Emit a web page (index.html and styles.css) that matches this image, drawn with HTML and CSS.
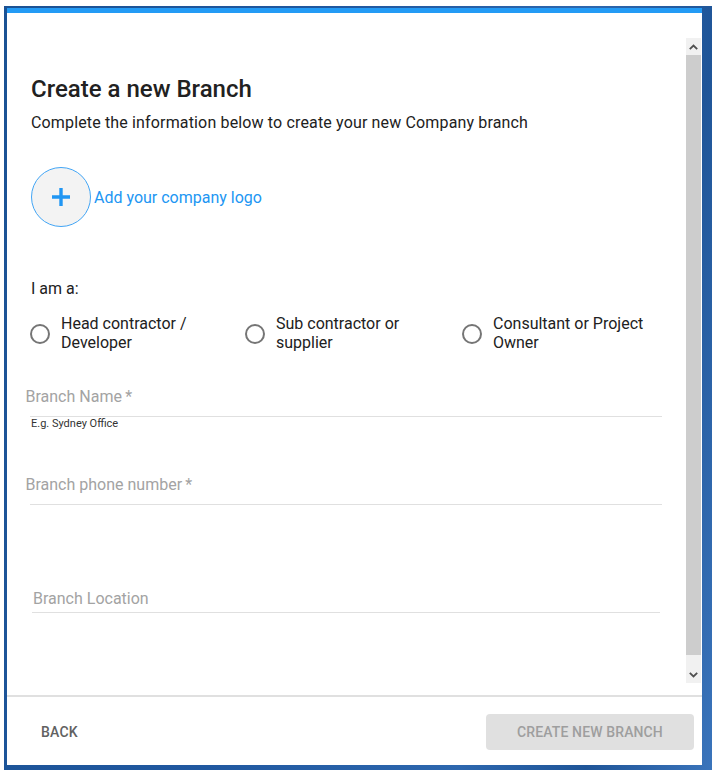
FILE: index.html
```html
<!DOCTYPE html>
<html lang="en">
<head>
<meta charset="utf-8">
<title>Create a new Branch</title>
<link rel="stylesheet" href="styles.css">
</head>
<body>
<div class="desktop">
  <div class="dialog">
    <div class="body">
      <div class="content">
        <h1 class="title">Create a new Branch</h1>
        <p class="subtitle">Complete the information below to create your new Company branch</p>

        <div class="logo-row">
          <div class="logo-circle">
            <svg width="20" height="20" viewBox="0 0 20 20"><path d="M10 1v18M1 10h18" stroke="#2196f3" stroke-width="3.4" fill="none"/></svg>
          </div>
          <span class="logo-text">Add your company logo</span>
        </div>

        <div class="iam">I am a:</div>
        <div class="radios">
          <label class="radio"><span class="radio-circle"></span><span class="radio-label">Head contractor / Developer</span></label>
          <label class="radio"><span class="radio-circle"></span><span class="radio-label">Sub contractor or supplier</span></label>
          <label class="radio"><span class="radio-circle"></span><span class="radio-label">Consultant or Project Owner</span></label>
        </div>

        <div class="field field-name">
          <div class="input"><span class="flabel">Branch Name&thinsp;*</span></div>
          <div class="helper">E.g. Sydney Office</div>
        </div>

        <div class="field field-phone">
          <div class="input"><span class="flabel">Branch phone number&thinsp;*</span></div>
        </div>

        <div class="field field-location">
          <div class="input"><span class="flabel">Branch Location</span></div>
        </div>
      </div>
      <div class="scrollbar">
        <div class="sb-btn sb-up">
          <svg width="9" height="6" viewBox="0 0 9 6"><path d="M0.8 5.2L4.5 1.5L8.2 5.2" stroke="#505050" stroke-width="1.8" fill="none"/></svg>
        </div>
        <div class="sb-thumb"></div>
        <div class="sb-gap"></div>
        <div class="sb-btn sb-down">
          <svg width="9" height="6" viewBox="0 0 9 6"><path d="M0.8 0.8L4.5 4.5L8.2 0.8" stroke="#505050" stroke-width="1.8" fill="none"/></svg>
        </div>
      </div>
    </div>
    <div class="footer">
      <span class="back">BACK</span>
      <span class="create">CREATE NEW BRANCH</span>
    </div>
  </div>
</div>
</body>
</html>
```

FILE: styles.css
```css
html, body {
  margin: 0;
  padding: 0;
  background: #ffffff;
}
body {
  font-family: Roboto, "Liberation Sans", sans-serif;
  color: #212121;
  width: 712px;
  height: 774px;
  overflow: hidden;
}
.desktop {
  margin: 6px 0 0 4px;
  width: 708px;
  height: 764px;
  box-sizing: border-box;
  padding: 2px 11px 5px 3px;
  background: linear-gradient(100deg, #1b5294 0%, #2058a0 40%, #2d67ae 70%, #1f5598 85%, #3a74bb 100%);
  display: flex;
}
.dialog {
  flex: 1;
  background: #ffffff;
  border-top: 5px solid #239bf5;
  display: flex;
  flex-direction: column;
}
.body {
  height: 682px;
  box-sizing: border-box;
  padding: 25px 1px 12px 0;
  display: flex;
}
.content {
  flex: 1;
  overflow: hidden;
  padding: 37px 24px 0 24px;
}
.title {
  margin: 0;
  font-size: 24px;
  line-height: 28px;
  font-weight: 500;
  color: #212121;
}
.subtitle {
  margin: 10px 0 0 0;
  font-size: 16px;
  line-height: 20px;
  letter-spacing: 0.15px;
  color: #212121;
}
.logo-row {
  margin-top: 34px;
  display: flex;
  align-items: center;
  gap: 3px;
}
.logo-circle {
  width: 60px;
  height: 60px;
  box-sizing: border-box;
  border: 1px solid #42a5f5;
  border-radius: 50%;
  background: #f3f3f3;
  display: flex;
  align-items: center;
  justify-content: center;
}
.logo-text {
  font-size: 16px;
  line-height: 20px;
  color: #2196f3;
  margin-top: 2px;
}
.iam {
  margin-top: 52px;
  font-size: 16px;
  line-height: 20px;
}
.radios {
  margin-top: 16px;
  margin-left: -1px;
  display: grid;
  grid-template-columns: 215px 217px 200px;
}
.radio {
  display: flex;
  align-items: center;
  gap: 11px;
}
.radio-circle {
  flex: none;
  width: 20px;
  height: 20px;
  box-sizing: border-box;
  border: 2px solid #757575;
  border-radius: 50%;
}
.radio-label {
  font-size: 16px;
  line-height: 18.5px;
  max-width: 172px;
}
.field {
  margin-left: -1px;
}
.input {
  border-bottom: 1px solid #e0e0e0;
  padding-bottom: 8.5px;
}
.flabel {
  display: block;
  font-size: 16px;
  line-height: 20px;
  color: #a3a3a3;
  margin-left: -4.5px;
}
.helper {
  font-size: 11px;
  line-height: 13px;
  color: #333333;
  padding-left: 1px;
}
.field-name {
  margin-top: 35px;
}
.field-phone {
  margin-top: 45.5px;
}
.field-location {
  margin-top: 84.5px;
  margin-left: 1px;
  margin-right: 2px;
}
.field-location .input {
  padding-bottom: 3px;
}
.field-location .flabel {
  margin-left: 1px;
}
.scrollbar {
  width: 15px;
  background: #f1f1f1;
  display: flex;
  flex-direction: column;
}
.sb-btn {
  height: 17px;
  display: flex;
  align-items: center;
  justify-content: center;
}
.sb-thumb {
  flex: 1;
  background: #cdcdcd;
}
.sb-gap {
  height: 11px;
}
.footer {
  flex: 1;
  border-top: 2px solid #e0e0e0;
  display: flex;
  align-items: center;
  justify-content: space-between;
  padding: 2px 8px 0 34px;
}
.back {
  font-size: 14px;
  font-weight: 500;
  color: #616161;
  letter-spacing: 0.2px;
}
.create {
  width: 208px;
  height: 36px;
  border-radius: 4px;
  background: #e0e0e0;
  color: #9e9e9e;
  font-size: 14px;
  font-weight: 500;
  letter-spacing: 0.12px;
  display: flex;
  align-items: center;
  justify-content: center;
}
```
